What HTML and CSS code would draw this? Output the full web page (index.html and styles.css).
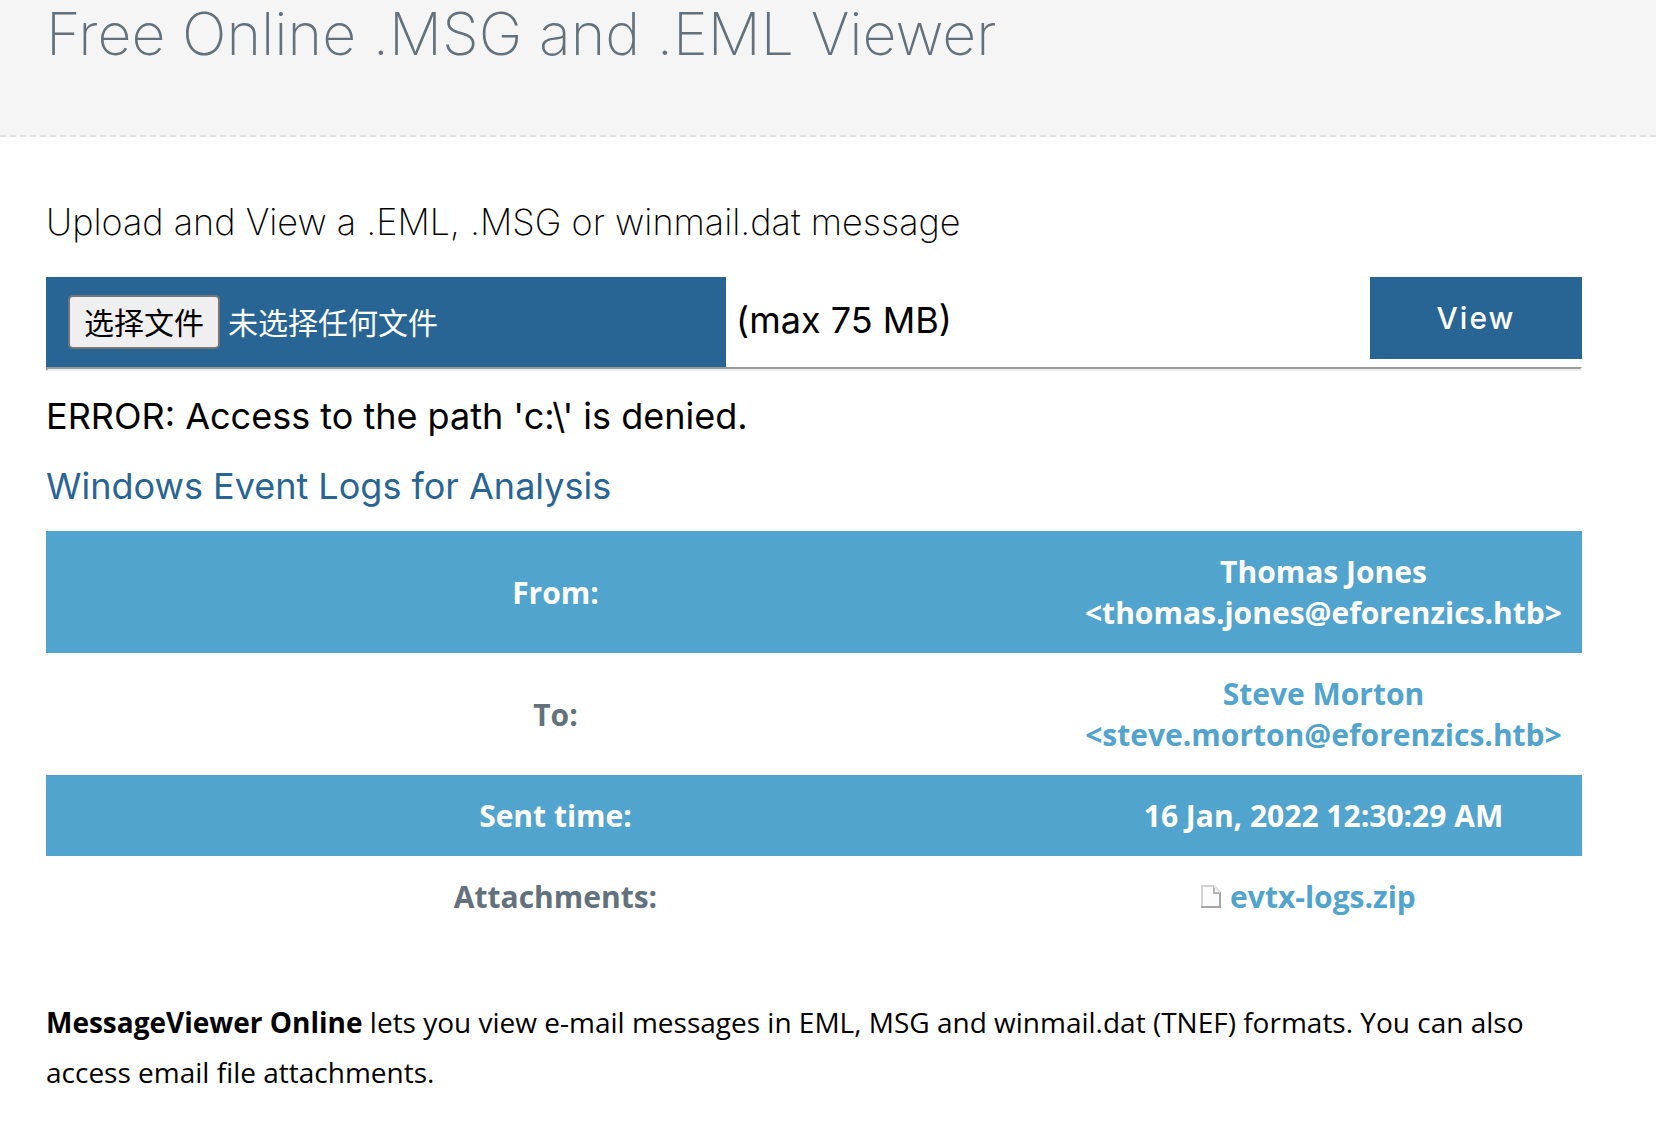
FILE: index.html
```html
<!DOCTYPE html>
<html lang="en">
<head>
<meta charset="utf-8">
<meta name="viewport" content="width=device-width, initial-scale=1">
<title>Free Online .MSG and .EML Viewer</title>
<link rel="stylesheet" href="styles.css">
</head>
<body>
<header class="masthead">
  <h1 class="masthead-title">Free Online .MSG and .EML Viewer</h1>
</header>
<main class="content">
  <h2 class="upload-title">Upload and View a .EML, .MSG or winmail.dat message</h2>
  <form class="upload">
    <label class="picker" lang="zh-CN">
      <input class="picker-input" type="file">
      <span class="picker-button">选择文件</span>
      <span class="picker-status">未选择任何文件</span>
    </label>
    <span class="upload-limit">(max 75 MB)</span>
    <button class="upload-submit" type="submit">View</button>
  </form>
  <hr class="divider">
  <p class="error">ERROR: Access to the path 'c:\' is denied.</p>
  <p class="subject"><a class="subject-link" href="#">Windows Event Logs for Analysis</a></p>
  <table class="details">
    <tbody>
      <tr><th class="details-name" scope="row">From:</th><td class="details-value">Thomas Jones<br>&lt;thomas.jones@eforenzics.htb&gt;</td></tr>
      <tr><th class="details-name" scope="row">To:</th><td class="details-value">Steve Morton<br>&lt;steve.morton@eforenzics.htb&gt;</td></tr>
      <tr><th class="details-name" scope="row">Sent time:</th><td class="details-value">16 Jan, 2022 12:30:29 AM</td></tr>
      <tr><th class="details-name" scope="row">Attachments:</th><td class="details-value"><a class="attachment" href="#"><svg class="attachment-icon" viewBox="0 0 20 23" aria-hidden="true"><path d="M1 1h12l6 7v14H1z" fill="#fbfbfb"/><path d="M1 22V1h12" fill="none" stroke="#d2d2d2" stroke-width="2"/><path d="M19 7v15" fill="none" stroke="#a6a6a6" stroke-width="2"/><path d="M0 22h20" stroke="#a6a6a6" stroke-width="2"/><path d="M13 1v7h6" fill="none" stroke="#b4b4b4" stroke-width="2"/><path d="M13 1l6 6" stroke="#dedede" stroke-width="2"/></svg>evtx-logs.zip</a></td></tr>
    </tbody>
  </table>
  <p class="about"><strong>MessageViewer Online</strong> lets you view e-mail messages in EML, MSG and winmail.dat (TNEF) formats. You can also access email file attachments.</p>
</main>
</body>
</html>
```
FILE: styles.css
```css
* {
  box-sizing: border-box;
}

body {
  margin: 0;
  background: #fff;
  color: #000;
  font-family: Inter, "Liberation Sans", sans-serif;
  font-size: 36px;
  line-height: 44px;
}

h1,
h2,
p {
  margin: 0;
}

a {
  text-decoration: none;
}

.masthead {
  padding: 0 74px 67px 46px;
  border-bottom: 2px dashed #e2e2e2;
  background: #f5f5f5;
}

.masthead-title {
  color: #63717d;
  font-size: 59px;
  font-weight: 250;
  line-height: 68px;
}

.content {
  padding: 63px 74px 40px 46px;
}

.upload-title {
  margin-bottom: 33px;
  font-size: 36px;
  font-weight: 200;
}

.upload {
  display: flex;
  align-items: flex-start;
}

.picker {
  position: relative;
  display: flex;
  flex: 0 1 680px;
  align-items: center;
  gap: 8px;
  height: 90px;
  padding: 0 22px;
  background: #286594;
  color: #fff;
  font-family: "Noto Sans CJK SC", sans-serif;
  font-size: 30px;
}

.picker-input {
  position: absolute;
  inset: 0;
  width: 100%;
  opacity: 0;
  cursor: pointer;
}

.picker-button {
  padding: 2px 14px 4px;
  border: 2px solid #767676;
  border-radius: 5px;
  background: #efefef;
  color: #000;
}

.picker-status {
  padding-bottom: 2px;
}

.upload-limit {
  padding: 21px 10px;
}

.upload-submit {
  width: 212px;
  height: 82px;
  margin-left: auto;
  padding: 0;
  border: 0;
  background: #286594;
  color: #fff;
  font-family: inherit;
  font-size: 30px;
  font-weight: 500;
  letter-spacing: 2px;
  cursor: pointer;
}

.divider {
  margin: 0;
  border: 2px inset #eee;
}

.error {
  margin: 23px 0 26px;
}

.subject {
  margin-bottom: 23px;
}

.subject-link {
  color: #286594;
}

.details {
  width: 100%;
  border-collapse: collapse;
  color: #51a4cd;
  font-family: "Open Sans", "Noto Sans", sans-serif;
  font-size: 30px;
  font-weight: 700;
  line-height: 41px;
  text-align: center;
}

.details tr:nth-child(odd) {
  background: #51a4cd;
  color: #fff;
}

.details-name,
.details-value {
  padding: 20px;
}

.details-name {
  width: 100%;
}

.details-value {
  white-space: nowrap;
}

.details tr:nth-child(even) .details-name {
  color: #63717d;
}

.attachment {
  margin-right: 30px;
  color: inherit;
}

.attachment-icon {
  width: 20px;
  height: 23px;
  margin-right: 9px;
}

.about {
  margin-top: 60px;
  font-family: "Open Sans", "Noto Sans", sans-serif;
  font-size: 28px;
  line-height: 50px;
}
```
